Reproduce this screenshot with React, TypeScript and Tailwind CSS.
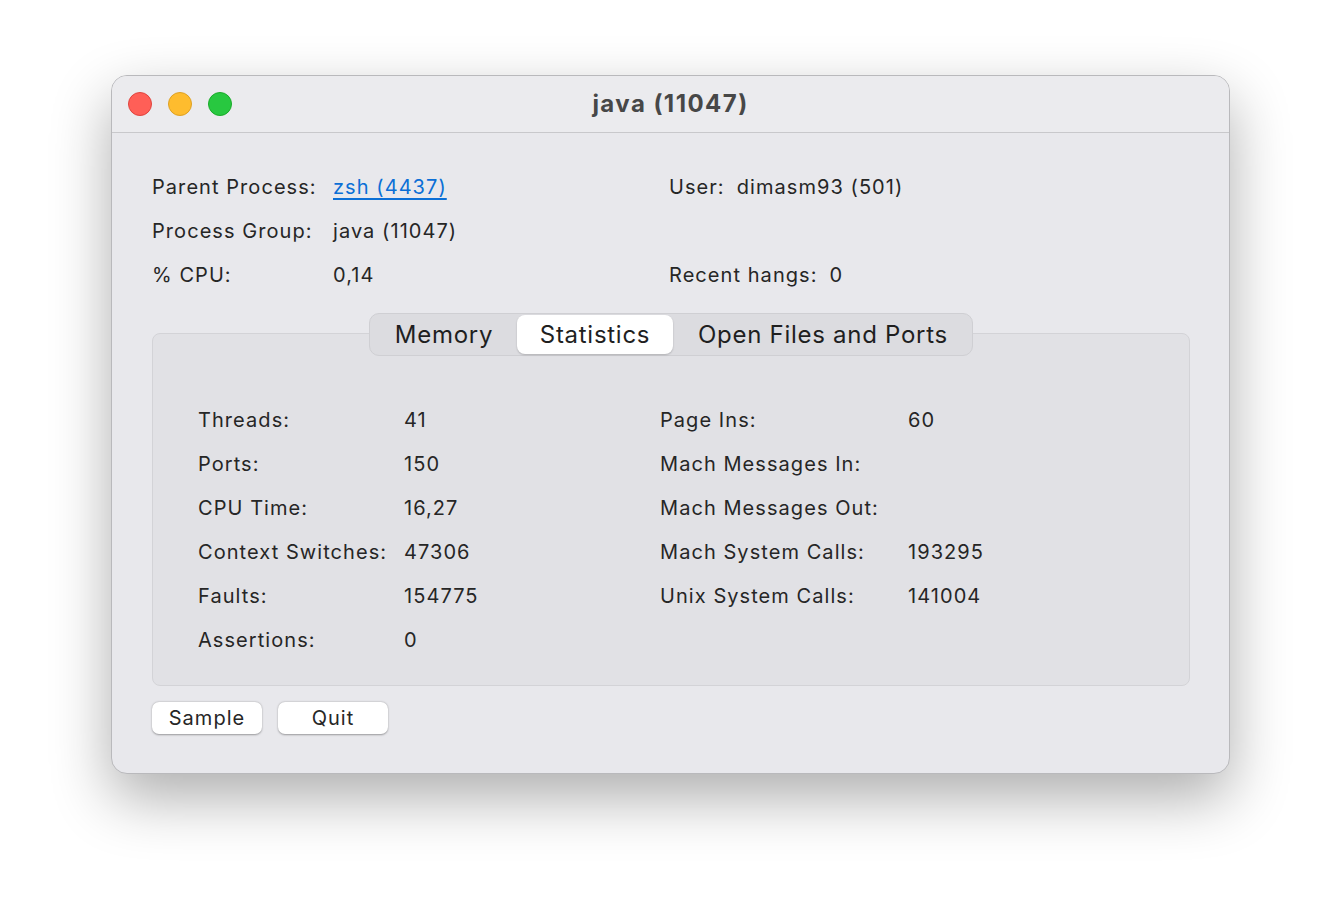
import React from 'react';

const stats: [string, string][] = [
    ['Threads:', '41'],
    ['Ports:', '150'],
    ['CPU Time:', '16,27'],
    ['Context Switches:', '47306'],
    ['Faults:', '154775'],
    ['Assertions:', '0'],
];

const statsRight: [string, string][] = [
    ['Page Ins:', '60'],
    ['Mach Messages In:', ''],
    ['Mach Messages Out:', ''],
    ['Mach System Calls:', '193295'],
    ['Unix System Calls:', '141004'],
];

const tabs = [
    { label: 'Memory', w: 'w-[146px]' },
    { label: 'Statistics', w: 'w-[156px]' },
    { label: 'Open Files and Ports', w: 'w-[300px]' },
];

const TrafficLights = () => (
    <div className="flex gap-4">
        <span className="w-6 h-6 rounded-full bg-[#ff5f57] border border-[#e0443e]" />
        <span className="w-6 h-6 rounded-full bg-[#febc2e] border border-[#dea123]" />
        <span className="w-6 h-6 rounded-full bg-[#28c840] border border-[#1aab29]" />
    </div>
);

export default function App() {
    return (
        <div
            className="w-full h-[922px] bg-white pl-[111px] pt-[75px] text-[20px] tracking-[0.053em] text-[#262626]"
            style={{ fontFamily: 'Inter, "Noto Sans", sans-serif' }}
        >
            <div className="w-[1119px] h-[699px] rounded-[16px] bg-[#e8e8ec] border border-[#b9b9bc] shadow-[0_24px_60px_rgba(0,0,0,0.32)] flex flex-col overflow-hidden">
                {/* title bar */}
                <div className="relative h-[57px] shrink-0 bg-[#ebebee] border-b border-[#c8c8cb] flex items-center pl-[16px]">
                    <TrafficLights />
                    <div className="absolute inset-0 flex items-center justify-center text-[24px] tracking-[0.06em] font-bold text-[#474747] pointer-events-none">
                        java (11047)
                    </div>
                </div>

                <div className="px-[40px] pt-[32px] flex flex-col">
                    {/* process info */}
                    <div className="grid grid-cols-[517px_1fr]">
                        <div className="flex flex-col">
                            <div className="flex h-[44px] items-center">
                                <span className="w-[181px]">Parent Process:</span>
                                <span className="text-[#0b6fd6] underline underline-offset-4">zsh (4437)</span>
                            </div>
                            <div className="flex h-[44px] items-center">
                                <span className="w-[181px]">Process Group:</span>
                                <span>java (11047)</span>
                            </div>
                            <div className="flex h-[44px] items-center">
                                <span className="w-[181px]">% CPU:</span>
                                <span>0,14</span>
                            </div>
                        </div>
                        <div className="flex flex-col">
                            <div className="flex h-[44px] items-center gap-3">
                                <span>User:</span>
                                <span>dimasm93 (501)</span>
                            </div>
                            <div className="h-[44px]" />
                            <div className="flex h-[44px] items-center gap-3">
                                <span>Recent hangs:</span>
                                <span>0</span>
                            </div>
                        </div>
                    </div>

                    {/* tab panel */}
                    <div className="mt-[36px] w-[1038px] h-[353px] rounded-[8px] bg-[#e1e1e5] border border-[#d3d3d7] flex flex-col">
                        <div className="-mt-[21px] mx-auto h-[43px] w-[604px] rounded-[10px] bg-[#dcdce0] border border-[#cfcfd3] flex items-center px-px">
                            {tabs.map((t) => (
                                <div
                                    key={t.label}
                                    className={
                                        t.label === 'Statistics'
                                            ? `${t.w} shrink-0 h-[39px] flex items-center justify-center whitespace-nowrap rounded-[8px] bg-white shadow-[0_1px_2px_rgba(0,0,0,0.2)] text-[24px] tracking-[0.03em] text-[#1f1f1f]`
                                            : `${t.w} shrink-0 h-[39px] flex items-center justify-center whitespace-nowrap text-[24px] tracking-[0.03em] text-[#1f1f1f]`
                                    }
                                >
                                    {t.label}
                                </div>
                            ))}
                        </div>

                        <div className="mt-[42px] pl-[45px] grid grid-cols-[462px_1fr]">
                            <div className="flex flex-col">
                                {stats.map(([k, v]) => (
                                    <div key={k} className="flex h-[44px] items-center">
                                        <span className="w-[206px]">{k}</span>
                                        <span>{v}</span>
                                    </div>
                                ))}
                            </div>
                            <div className="flex flex-col">
                                {statsRight.map(([k, v]) => (
                                    <div key={k} className="flex h-[44px] items-center">
                                        <span className="w-[248px]">{k}</span>
                                        <span>{v}</span>
                                    </div>
                                ))}
                            </div>
                        </div>
                    </div>

                    {/* buttons */}
                    <div className="mt-[16px] flex gap-4">
                        {['Sample', 'Quit'].map((b) => (
                            <button
                                key={b}
                                className="w-[110px] h-[32px] rounded-[7px] bg-white shadow-[0_0.5px_2px_rgba(0,0,0,0.35)] flex items-center justify-center text-[20px] tracking-[0.053em] text-[#262626]"
                            >
                                {b}
                            </button>
                        ))}
                    </div>
                </div>
            </div>
        </div>
    );
}
